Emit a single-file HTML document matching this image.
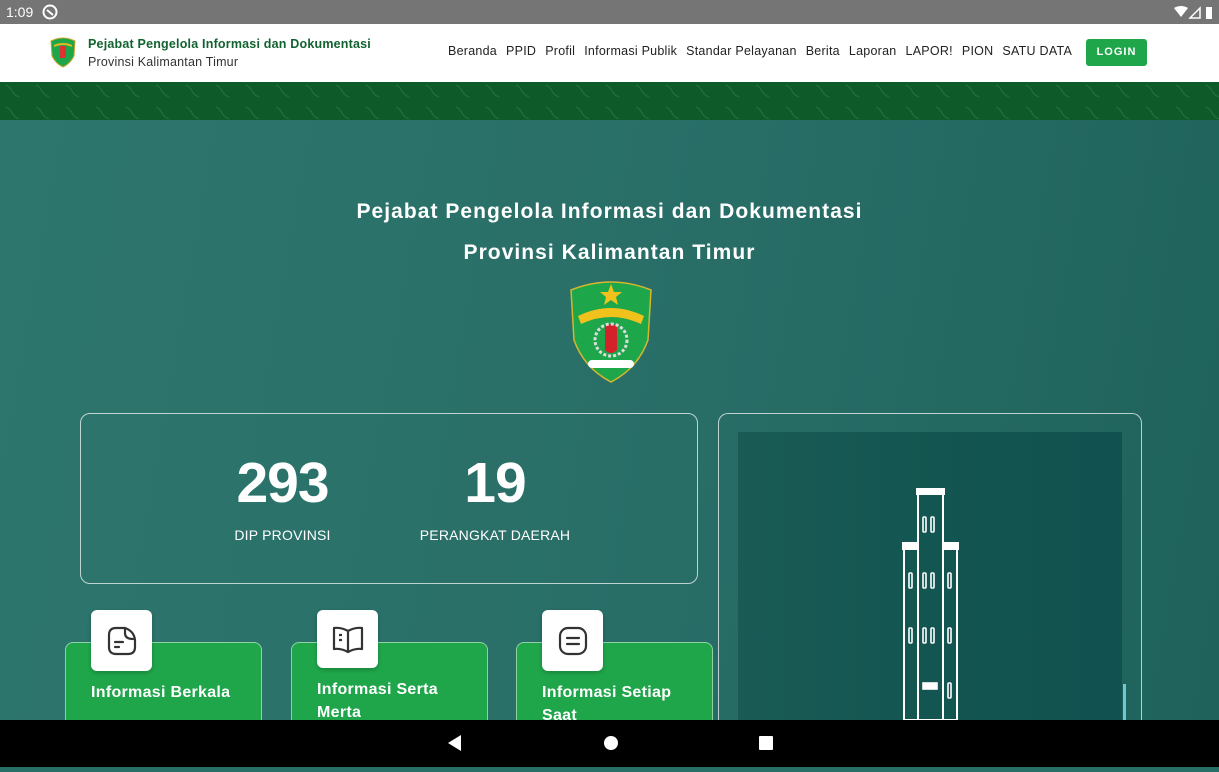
<!DOCTYPE html>
<html><head><meta charset="utf-8"><style>
*{margin:0;padding:0;box-sizing:border-box}
body{width:1219px;height:767px;overflow:hidden;font-family:"Liberation Sans",sans-serif;position:relative;background:#276f67}
.sb{position:absolute;top:0;left:0;width:1219px;height:24px;background:#757575;color:#fff;font-size:14px}
.nav{position:absolute;top:24px;left:0;width:1219px;height:58px;background:#fff}
.band{position:absolute;top:82px;left:0;width:1219px;height:38px;background:#0e5a28;overflow:hidden}
.hero{position:absolute;top:120px;left:0;width:1219px;height:600px;background:linear-gradient(100deg,#2d766d 0%,#296f68 50%,#1f625c 100%)}
.bot{position:absolute;top:720px;left:0;width:1219px;height:47px;background:#000}
.menu{position:absolute;top:20px;font-size:12.5px;color:#222;left:448px;letter-spacing:0.25px}
.menu span{margin-right:9px}
.h{position:absolute;width:1219px;text-align:center;color:#fff;font-weight:bold;font-size:21px;letter-spacing:1.05px}
.stat{position:absolute;left:80px;top:293px;width:618px;height:171px;border:1px solid rgba(255,255,255,.7);border-radius:10px}
.num{position:absolute;color:#fff;font-weight:bold;font-size:57px;text-align:center;letter-spacing:-1px}
.lbl{position:absolute;color:#fff;font-size:14px;text-align:center;letter-spacing:0.2px}
.card{position:absolute;top:522px;width:197px;height:100px;background:#1fa64a;border:1px solid rgba(255,255,255,.5);border-radius:8px}
.card b{position:absolute;left:25px;color:#fff;font-size:16px;line-height:23px;letter-spacing:0.3px}
.ic{position:absolute;width:61px;height:61px;background:#fff;border-radius:6px;top:490px;box-shadow:0 2px 4px rgba(0,0,0,.2)}
.ic svg{position:absolute;left:15px;top:15px}
</style></head><body>
<div class="sb"><span style="position:absolute;left:6px;top:4px">1:09</span>
<svg style="position:absolute;left:42px;top:4px" width="16" height="16"><circle cx="8" cy="8" r="6.5" fill="none" stroke="#fff" stroke-width="2"/><path d="M5 6 L11 11" stroke="#fff" stroke-width="2"/></svg>
<svg style="position:absolute;left:1174px;top:6px" width="40" height="14"><path d="M0 2 Q7 -2 14 2 L7 11Z" fill="#fff"/><path d="M16 12 L26 2 L26 12Z" fill="none" stroke="#fff" stroke-width="1.5"/><rect x="32" y="1" width="6" height="12" fill="#fff"/></svg></div>
<div class="nav">
<svg style="position:absolute;left:50px;top:12px" width="26" height="32" viewBox="0 0 26 32"><path d="M1 5 Q13 -1 25 5 L24 20 Q20 28 13 31 Q6 28 2 20Z" fill="#1ea64a" stroke="#caa52a" stroke-width="1"/><rect x="10" y="10" width="6" height="12" fill="#d33"/><path d="M4 10 Q13 6 22 10" stroke="#e6b820" stroke-width="2" fill="none"/></svg>
<div style="position:absolute;left:88px;top:13px;font-size:12.5px;font-weight:bold;color:#12622f;letter-spacing:0.2px">Pejabat Pengelola Informasi dan Dokumentasi</div>
<div style="position:absolute;left:88px;top:31px;font-size:12.5px;color:#333;letter-spacing:0.2px">Provinsi Kalimantan Timur</div>
<div class="menu"><span>Beranda</span><span>PPID</span><span>Profil</span><span>Informasi Publik</span><span>Standar Pelayanan</span><span>Berita</span><span>Laporan</span><span>LAPOR!</span><span>PION</span><span>SATU DATA</span></div>
<div style="position:absolute;left:1086px;top:15px;width:61px;height:27px;background:#1fa64a;border-radius:3px;color:#fff;font-size:11px;font-weight:bold;text-align:center;line-height:27px;letter-spacing:1px">LOGIN</div>
</div>
<div class="band"><svg width="1219" height="38"><defs><pattern id="p" width="30" height="22" patternUnits="userSpaceOnUse"><path d="M6 3 Q10 5 12 9 Q14 13 19 15" stroke="#23703c" stroke-width="1.2" fill="none"/></pattern></defs><rect width="1219" height="38" fill="url(#p)"/></svg></div>
<div class="hero">
<div class="h" style="top:80px">Pejabat Pengelola Informasi dan Dokumentasi</div>
<div class="h" style="top:121px">Provinsi Kalimantan Timur</div>
<svg style="position:absolute;left:568px;top:158px" width="86" height="105" viewBox="0 0 86 105"><path d="M3 12 Q43 -4 83 12 L80 62 Q70 90 43 104 Q16 90 6 62Z" fill="#1ea64a" stroke="#d8b62c" stroke-width="1.5"/><polygon points="43,6 46,14 54,14 48,19 50,27 43,22 36,27 38,19 32,14 40,14" fill="#f1c21b"/><path d="M10 38 Q43 22 76 38 L73 46 Q43 32 13 46Z" fill="#f1c21b"/><path d="M37 48 Q43 44 49 48 L49 72 Q43 78 37 72Z" fill="#d3222a"/><ellipse cx="43" cy="62" rx="16" ry="16" fill="none" stroke="#ddd" stroke-width="3" stroke-dasharray="3 2"/><rect x="20" y="82" width="46" height="8" rx="4" fill="#fff"/></svg>
<div class="stat"></div>
<div class="num" style="left:215px;top:330px;width:135px">293</div>
<div class="lbl" style="left:200px;top:407px;width:165px">DIP PROVINSI</div>
<div class="num" style="left:440px;top:330px;width:110px">19</div>
<div class="lbl" style="left:405px;top:407px;width:180px">PERANGKAT DAERAH</div>
<div style="position:absolute;left:718px;top:293px;width:424px;height:320px;border:1px solid rgba(255,255,255,.7);border-radius:10px;border-bottom:none"></div>
<div style="position:absolute;left:738px;top:312px;width:384px;height:300px;background:linear-gradient(90deg,#1a5b56,#135550 50%,#115250)">
<svg style="position:absolute;left:163px;top:56px" width="60" height="232" stroke="#fff" stroke-width="2" fill="none"><rect x="17" y="3" width="25" height="229"/><rect x="16" y="0" width="27" height="6" fill="#fff"/><rect x="3" y="58" width="14" height="174"/><rect x="2" y="55" width="14" height="6" fill="#fff"/><rect x="42" y="58" width="14" height="174"/><rect x="43" y="55" width="14" height="6" fill="#fff"/><g stroke-width="1.6"><rect x="22" y="29" width="3" height="15" rx="1"/><rect x="30" y="29" width="3" height="15" rx="1"/><rect x="22" y="85" width="3" height="15" rx="1"/><rect x="30" y="85" width="3" height="15" rx="1"/><rect x="22" y="140" width="3" height="15" rx="1"/><rect x="30" y="140" width="3" height="15" rx="1"/><rect x="8" y="85" width="3" height="15" rx="1"/><rect x="47" y="85" width="3" height="15" rx="1"/><rect x="8" y="140" width="3" height="15" rx="1"/><rect x="47" y="140" width="3" height="15" rx="1"/><rect x="22" y="195" width="14" height="6" fill="#fff"/><rect x="47" y="195" width="3" height="15" rx="1"/></g></svg>
<div style="position:absolute;left:385px;top:252px;width:3px;height:48px;background:#6fc7cf"></div>
</div>
<div class="card" style="left:65px"><b style="top:38px">Informasi Berkala</b></div>
<div class="card" style="left:291px"><b style="top:35px">Informasi Serta<br>Merta</b></div>
<div class="card" style="left:516px"><b style="top:38px">Informasi Setiap<br>Saat</b></div>
<div class="ic" style="left:91px"><svg width="32" height="32" viewBox="0 0 32 32" fill="none" stroke="#333" stroke-width="2.2" stroke-linecap="round"><path d="M10 3 H19 Q28 6 29 15 V22 Q29 29 22 29 H10 Q3 29 3 22 V10 Q3 3 10 3Z"/><path d="M19 3 V8 Q19 14 27 14"/><path d="M9 17 H17 M9 22 H13"/></svg></div>
<div class="ic" style="left:317px;top:490px;height:58px"><svg width="32" height="30" viewBox="0 0 32 30" fill="none" stroke="#333" stroke-width="2.2" stroke-linejoin="round"><path d="M16 6 Q9 2 2 3 V24 Q9 23 16 27 Q23 23 30 24 V3 Q23 2 16 6Z M16 6 V27"/><path d="M7 10 H10 M7 15 H10"/></svg></div>
<div class="ic" style="left:542px"><svg width="32" height="32" viewBox="0 0 32 32" fill="none" stroke="#333" stroke-width="2.2" stroke-linecap="round"><rect x="3" y="3" width="26" height="26" rx="8"/><path d="M10 13 H22 M10 19 H22"/></svg></div>
</div>
<div class="bot"><svg width="1219" height="47"><polygon points="448,23 461,15 461,31" fill="#fff"/><circle cx="611" cy="23" r="7" fill="#fff"/><rect x="759" y="16" width="14" height="14" rx="1" fill="#fff"/></svg></div>
</body></html>
